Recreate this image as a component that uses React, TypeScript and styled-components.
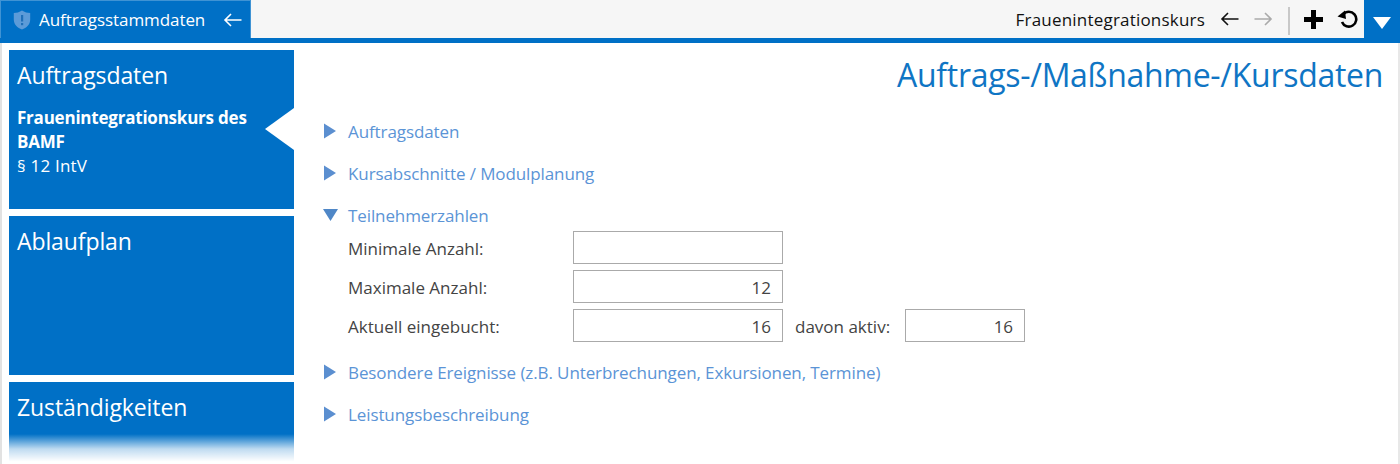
import styled, { createGlobalStyle } from "styled-components";

const BLUE = "#0070c6";

const GlobalStyle = createGlobalStyle`
    html, body {
        margin: 0;
        height: 100%;
        overflow: hidden;
        background: white;
    }
    body {
        font-family: "Open Sans", "Noto Sans", sans-serif;
    }
`;

const Page = styled.div`
    height: 464px;
    display: flex;
    flex-direction: column;
`;

const TopBar = styled.header`
    height: 38px;
    flex: none;
    display: flex;
    align-items: stretch;
    justify-content: space-between;
    background: #f6f6f6;
    border-bottom: 5px solid ${BLUE};
`;

const Tab = styled.div`
    width: 251px;
    height: 38px;
    box-sizing: border-box;
    display: flex;
    align-items: center;
    gap: 8px;
    padding: 0 7px 0 12px;
    background: ${BLUE};
    border: 1px solid #3f93d4;
    border-bottom: none;
    color: white;
    font-size: 17px;
    letter-spacing: -0.08px;
`;

const TabLabel = styled.span`
    flex: 1;
`;

const Tools = styled.div`
    display: flex;
    align-items: center;
    height: 38px;
`;

const CourseName = styled.span`
    color: #111;
    font-size: 17px;
    letter-spacing: 0.2px;
    margin-right: 13px;
`;

const ToolButton = styled.span<{ $after: number }>`
    display: flex;
    align-items: center;
    justify-content: center;
    width: 24px;
    margin-right: ${({ $after }) => $after}px;
`;

const Divider = styled.span`
    width: 2px;
    height: 28px;
    margin: 4px 11px 0 13px;
    background: #c8c8c8;
`;

const MenuButton = styled.div`
    width: 36px;
    height: 43px;
    box-sizing: border-box;
    padding-top: 2px;
    margin-left: 4px;
    align-self: flex-start;
    display: flex;
    align-items: center;
    justify-content: center;
    background: ${BLUE};
`;

const Body = styled.div`
    flex: 1;
    min-height: 0;
    display: flex;
    border-left: 2px solid #e2e2e2;
    border-right: 2px solid #e8e8e8;
`;

const Sidebar = styled.nav`
    position: relative;
    width: 285px;
    flex: none;
    margin: 7px 0 0 7px;
    display: flex;
    flex-direction: column;
    gap: 7px;
    overflow: hidden;
`;

const Tile = styled.section`
    position: relative;
    flex: none;
    height: 159px;
    box-sizing: border-box;
    padding: 7px 8px;
    background: ${BLUE};
    color: white;
`;

const TileTitle = styled.h2`
    margin: 0 0 13px;
    font-size: 23px;
    font-weight: 400;
    line-height: 36px;
    letter-spacing: -0.1px;
`;

const TileStrong = styled.div`
    width: 240px;
    font-size: 17px;
    font-weight: 700;
    line-height: 24px;
    letter-spacing: -0.22px;
`;

const TileText = styled.div`
    font-size: 17px;
    line-height: 24px;
    letter-spacing: 0.2px;
`;

const Notch = styled.span`
    position: absolute;
    top: 58px;
    right: 0;
    width: 0;
    height: 0;
    border-top: 21px solid transparent;
    border-bottom: 21px solid transparent;
    border-right: 29px solid white;
`;

const Fade = styled.div`
    position: absolute;
    left: 0;
    right: 0;
    top: 384px;
    height: 30px;
    background: linear-gradient(to bottom, rgba(255, 255, 255, 0), rgba(255, 255, 255, 0.75) 50%, white 92%);
`;

const Main = styled.main`
    flex: 1;
    min-width: 0;
    padding: 7px 15px 0 29px;
`;

const PageTitle = styled.h1`
    margin: 0 0 16px;
    text-align: right;
    color: #0f75c4;
    font-size: 32px;
    font-weight: 400;
    line-height: 50px;
    letter-spacing: -0.3px;
`;

const Section = styled.div`
    margin-bottom: 12px;
`;

const SectionHead = styled.div`
    height: 30px;
    display: flex;
    align-items: center;
    gap: 10px;
    color: #5b94d6;
    font-size: 17px;
    letter-spacing: -0.1px;
`;

const Rows = styled.div`
    margin: -2px 0 3px;
`;

const FormRow = styled.div`
    height: 39px;
    display: flex;
    align-items: center;
    margin-left: 25px;
    color: #444;
    font-size: 17px;
`;

const FieldLabel = styled.label`
    width: 225px;
    padding-top: 2px;
`;

const Field = styled.div<{ $width: number }>`
    width: ${({ $width }) => $width}px;
    height: 33px;
    box-sizing: border-box;
    border: 1px solid #aaa;
    padding: 2px 11px 0;
    display: flex;
    align-items: center;
    justify-content: flex-end;
    background: white;
`;

const SubLabel = styled.label`
    margin: 0 15px 0 12px;
    padding-top: 2px;
`;

function SectionTitle({ title, open }: { title: string; open?: boolean }) {
    return (
        <SectionHead>
            <svg width="15" height="16" viewBox="0 0 15 16">
                {open ? (
                    <polygon points="0,2 15,2 7.5,14" fill="#4f87c7" />
                ) : (
                    <polygon points="1,0.5 13,8 1,15.5" fill="#5b8fd0" />
                )}
            </svg>
            {title}
        </SectionHead>
    );
}

export default function App() {
    return (
        <Page>
            <GlobalStyle />
            <TopBar>
                <Tab>
                    <svg width="18" height="20" viewBox="0 0 18 20">
                        <path d="M9 0.5 C11.5 2.2 14.5 3 17.2 3 V9.5 C17.2 14.5 13.5 17.8 9 19.5 C4.5 17.8 0.8 14.5 0.8 9.5 V3 C3.5 3 6.5 2.2 9 0.5 Z" fill="#5c9bd8" />
                        <rect x="8" y="5" width="2.2" height="6.5" fill="#1f6fb8" />
                        <rect x="8" y="13" width="2.2" height="2.2" fill="#1f6fb8" />
                    </svg>
                    <TabLabel>Auftragsstammdaten</TabLabel>
                    <svg width="20" height="14" viewBox="0 0 20 14" fill="none" stroke="white" strokeWidth="1.6">
                        <path d="M18.5 7 H2 M8 1 L2 7 L8 13" />
                    </svg>
                </Tab>
                <Tools>
                    <CourseName>Frauenintegrationskurs</CourseName>
                    <ToolButton $after={9}>
                        <svg width="20" height="14" viewBox="0 0 20 14" fill="none" stroke="#111" strokeWidth="1.6">
                            <path d="M18.5 7 H2 M8 1 L2 7 L8 13" />
                        </svg>
                    </ToolButton>
                    <ToolButton $after={0}>
                        <svg width="20" height="14" viewBox="0 0 20 14" fill="none" stroke="#aaa" strokeWidth="1.6">
                            <path d="M1.5 7 H18 M12 1 L18 7 L12 13" />
                        </svg>
                    </ToolButton>
                    <Divider />
                    <ToolButton $after={11}>
                        <svg width="19" height="19" viewBox="0 0 19 19" fill="#000">
                            <rect x="7" y="0" width="5" height="19" />
                            <rect x="0" y="7" width="19" height="5" />
                        </svg>
                    </ToolButton>
                    <ToolButton $after={0}>
                        <svg width="22" height="18" viewBox="0 0 22 18" fill="none">
                            <path d="M6.2 4.4 A7.4 7.4 0 1 1 5 12" stroke="#000" strokeWidth="2.6" />
                            <polygon points="0.5,6.5 9,9 8,0.5" fill="#000" />
                        </svg>
                    </ToolButton>
                    <MenuButton>
                        <svg width="18" height="12" viewBox="0 0 18 12">
                            <polygon points="0,0 18,0 9,12" fill="white" />
                        </svg>
                    </MenuButton>
                </Tools>
            </TopBar>
            <Body>
                <Sidebar>
                    <Tile>
                        <TileTitle>Auftragsdaten</TileTitle>
                        <TileStrong>Frauenintegrationskurs des BAMF</TileStrong>
                        <TileText>§ 12 IntV</TileText>
                        <Notch />
                    </Tile>
                    <Tile>
                        <TileTitle>Ablaufplan</TileTitle>
                    </Tile>
                    <Tile>
                        <TileTitle>Zuständigkeiten</TileTitle>
                    </Tile>
                    <Fade />
                </Sidebar>
                <Main>
                    <PageTitle>Auftrags-/Maßnahme-/Kursdaten</PageTitle>
                    <Section>
                        <SectionTitle title="Auftragsdaten" />
                    </Section>
                    <Section>
                        <SectionTitle title="Kursabschnitte / Modulplanung" />
                    </Section>
                    <Section>
                        <SectionTitle title="Teilnehmerzahlen" open />
                        <Rows>
                            <FormRow>
                                <FieldLabel>Minimale Anzahl:</FieldLabel>
                                <Field $width={210} />
                            </FormRow>
                            <FormRow>
                                <FieldLabel>Maximale Anzahl:</FieldLabel>
                                <Field $width={210}>12</Field>
                            </FormRow>
                            <FormRow>
                                <FieldLabel>Aktuell eingebucht:</FieldLabel>
                                <Field $width={210}>16</Field>
                                <SubLabel>davon aktiv:</SubLabel>
                                <Field $width={120}>16</Field>
                            </FormRow>
                        </Rows>
                    </Section>
                    <Section>
                        <SectionTitle title="Besondere Ereignisse (z.B. Unterbrechungen, Exkursionen, Termine)" />
                    </Section>
                    <Section>
                        <SectionTitle title="Leistungsbeschreibung" />
                    </Section>
                </Main>
            </Body>
        </Page>
    );
}
